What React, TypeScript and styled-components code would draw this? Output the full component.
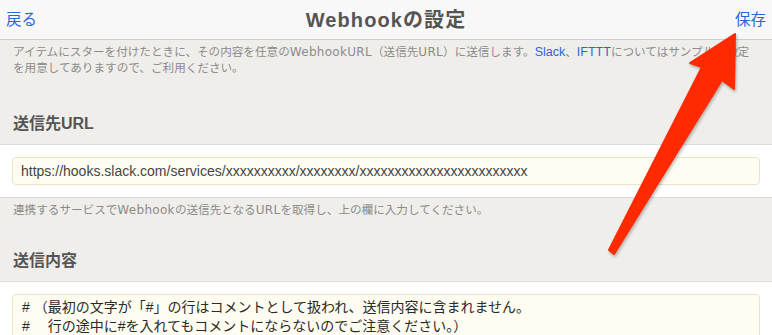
import React from "react";
import styled, { createGlobalStyle } from "styled-components";

const Global = createGlobalStyle`
  html, body { margin: 0; padding: 0; }
  body {
    background: #efeeea;
    font-family: "Liberation Sans", "Noto Sans CJK JP", sans-serif;
    overflow: hidden;
  }
`;

const Page = styled.div`
  position: relative;
  width: 772px;
  height: 335px;
  overflow: hidden;
  background: #efeeea;
`;

const NavBar = styled.header`
  display: grid;
  grid-template-columns: 1fr auto 1fr;
  align-items: center;
  height: 39px;
  padding: 0 6px;
  background: #f8f8f8;
  border-bottom: 1px solid #cdcdcd;
`;

const NavButton = styled.span<{ $align: "left" | "right" }>`
  justify-self: ${(p) => (p.$align === "left" ? "start" : "end")};
  font-size: 15.5px;
  color: #2b66d9;
  line-height: 20px;
`;

const Title = styled.h1`
  margin: 0;
  font-size: 20px;
  font-weight: bold;
  color: #555;
  letter-spacing: 1.1px;
  line-height: 24px;
`;

const Note = styled.p<{ $bottom?: number }>`
  margin: 0;
  padding: 4px 13px ${(p) => p.$bottom ?? 0}px;
  font-size: 11.6px;
  line-height: 16px;
  color: #8b8b8b;
`;

const Latin = styled.span`
  font-family: "DejaVu Sans", sans-serif;
  font-size: 12px;
  letter-spacing: 0.3px;
`;

const Link = styled.span`
  font-family: "Liberation Sans", sans-serif;
  font-size: 12.5px;
  color: #2b66d9;
`;

const SectionHeader = styled.h2`
  margin: 0;
  padding: 32px 13px 9px;
  font-size: 16px;
  font-weight: bold;
  line-height: 22px;
  color: #555;
`;

const Section = styled.div`
  background: #fff;
  border-top: 1px solid #dcdcdc;
  border-bottom: 1px solid #dcdcdc;
  padding: 12px 12px;
`;

const UrlField = styled.div`
  height: 26px;
  box-sizing: content-box;
  display: flex;
  align-items: center;
  padding: 0 8px;
  background: #fffdf1;
  border: 1px solid #ece3c6;
  border-radius: 4px;
  font-size: 14px;
  color: #444;
  white-space: nowrap;
`;

const BodyField = styled.div`
  height: 120px;
  padding: 3px 9px;
  background: #fffdf1;
  border: 1px solid #ece3c6;
  border-radius: 4px;
  font-size: 14px;
  line-height: 19px;
  color: #2a2a2a;
  white-space: pre;
`;

const Overlay = styled.svg`
  position: absolute;
  top: 0;
  left: 0;
  width: 772px;
  height: 335px;
  pointer-events: none;
  filter: drop-shadow(1px 2px 1.5px rgba(0, 0, 0, 0.28));
`;

export default function App() {
  return (
    <Page>
      <Global />
      <NavBar>
        <NavButton $align="left">戻る</NavButton>
        <Title>Webhookの設定</Title>
        <NavButton $align="right">保存</NavButton>
      </NavBar>
      <Note $bottom={5}>
        アイテムにスターを付けたときに、その内容を任意の<Latin>WebhookURL</Latin>（送信先<Latin>URL</Latin>）に送信します。
        <Link>Slack</Link>、<Link>IFTTT</Link>についてはサンプルの設定を用意してありますので、ご利用ください。
      </Note>
      <SectionHeader>送信先URL</SectionHeader>
      <Section>
        <UrlField>
          https://hooks.slack.com/services/xxxxxxxxxx/xxxxxxxx/xxxxxxxxxxxxxxxxxxxxxxxx
        </UrlField>
      </Section>
      <Note>
        連携するサービスで<Latin>Webhook</Latin>の送信先となる<Latin>URL</Latin>を取得し、上の欄に入力してください。
      </Note>
      <SectionHeader>送信内容</SectionHeader>
      <Section>
        <BodyField>
          {"# （最初の文字が「#」の行はコメントとして扱われ、送信内容に含まれません。\n# 　行の途中に#を入れてもコメントにならないのでご注意ください。）"}
        </BodyField>
      </Section>
      <Overlay viewBox="0 0 772 335">
        <polygon
          points="735,34 734,89 722,80 614,254 609,250 702,67 690,63"
          fill="#ff2a00"
          stroke="#ff2a00"
          strokeWidth={2}
          strokeLinejoin="round"
        />
      </Overlay>
    </Page>
  );
}
